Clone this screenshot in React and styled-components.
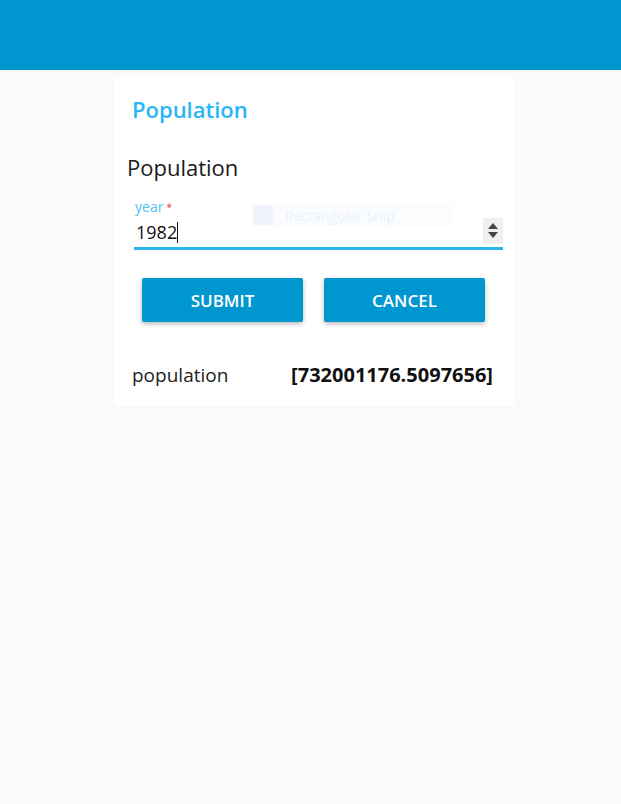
import styled, { createGlobalStyle } from "styled-components";

const GlobalStyle = createGlobalStyle`
  html, body {
    margin: 0;
    padding: 0;
    background: #fafafa;
    font-family: "Open Sans", "Noto Sans", sans-serif;
  }
`;

const Page = styled.div`
  min-height: 804px;
  background: #fafafa;
`;

const TopBar = styled.header`
  height: 70px;
  background: #0096cf;
`;

const Card = styled.section`
  position: relative;
  width: 400px;
  margin: 7px 0 0 115px;
  background: #ffffff;
  padding: 15px 0 18px;
  box-sizing: border-box;
`;

const Title = styled.h2`
  margin: 0 0 0 17px;
  font-size: 22px;
  font-weight: 600;
  color: #29b6f6;
  line-height: 34px;
`;

const SubTitle = styled.h3`
  margin: 26px 0 0 12px;
  font-size: 22px;
  font-weight: 400;
  color: #1a1a1a;
  line-height: 30px;
`;

const Field = styled.div`
  position: relative;
  margin: 16px 12px 0 19px;
  padding-top: 19px;
  border-bottom: 3px solid #29b6ef;
`;

const Label = styled.label`
  position: absolute;
  top: 0;
  left: 1px;
  font-size: 14px;
  color: #4fc3f7;
  line-height: 18px;
`;

const Star = styled.span`
  color: #e53935;
  font-size: 10px;
  vertical-align: top;
  margin-left: 3px;
`;

const InputRow = styled.div`
  display: flex;
  align-items: center;
  height: 30px;
`;

const Value = styled.span`
  flex: 1;
  font-size: 18px;
  color: #111;
  padding-left: 2px;
`;

const Caret = styled.span`
  display: inline-block;
  width: 1px;
  height: 21px;
  background: #111;
  vertical-align: -4px;
`;

const Spinner = styled.div`
  width: 20px;
  height: 26px;
  background: #efefef;
  display: flex;
  flex-direction: column;
  align-items: center;
  justify-content: center;
  gap: 3px;
  margin-bottom: 3px;
`;

const Arrow = styled.span`
  width: 0;
  height: 0;
  border-left: 5px solid transparent;
  border-right: 5px solid transparent;
  ${(p) =>
    p.up ? "border-bottom: 6px solid #444;" : "border-top: 6px solid #444;"}
`;

const SnipGhost = styled.div`
  position: absolute;
  left: 117px;
  top: 6px;
  width: 202px;
  height: 22px;
  display: flex;
  align-items: center;
  gap: 12px;
  background: rgba(235, 243, 252, 0.25);
  color: rgba(215, 228, 243, 0.45);
  font-size: 14px;
  pointer-events: none;
`;

const SnipIcon = styled.span`
  width: 20px;
  height: 20px;
  margin-left: 2px;
  background: rgba(220, 232, 248, 0.35);
`;

const Buttons = styled.div`
  display: flex;
  gap: 21px;
  margin: 28px 0 0 27px;
`;

const Button = styled.button`
  width: 161px;
  height: 44px;
  border: none;
  border-radius: 2px;
  background: #0096cf;
  color: #fff;
  font-family: inherit;
  font-size: 17px;
  font-weight: 600;
  box-shadow: 0 2px 5px rgba(0, 0, 0, 0.28);
  cursor: pointer;
`;

const Result = styled.div`
  display: flex;
  justify-content: space-between;
  align-items: center;
  margin: 39px 22px 0 17px;
  font-size: 19px;
  color: #222;
`;

const ResultValue = styled.span`
  font-size: 20px;
  font-weight: 700;
  color: #111;
`;

export default function App() {
  return (
    <Page>
      <GlobalStyle />
      <TopBar />
      <Card>
        <Title>Population</Title>
        <SubTitle>Population</SubTitle>
        <Field>
          <Label>
            year<Star>*</Star>
          </Label>
          <InputRow>
            <Value>
              1982<Caret />
            </Value>
            <Spinner>
              <Arrow up />
              <Arrow />
            </Spinner>
          </InputRow>
          <SnipGhost>
            <SnipIcon />
            Rectangular Snip
          </SnipGhost>
        </Field>
        <Buttons>
          <Button>SUBMIT</Button>
          <Button>CANCEL</Button>
        </Buttons>
        <Result>
          <span>population</span>
          <ResultValue>[732001176.5097656]</ResultValue>
        </Result>
      </Card>
    </Page>
  );
}
